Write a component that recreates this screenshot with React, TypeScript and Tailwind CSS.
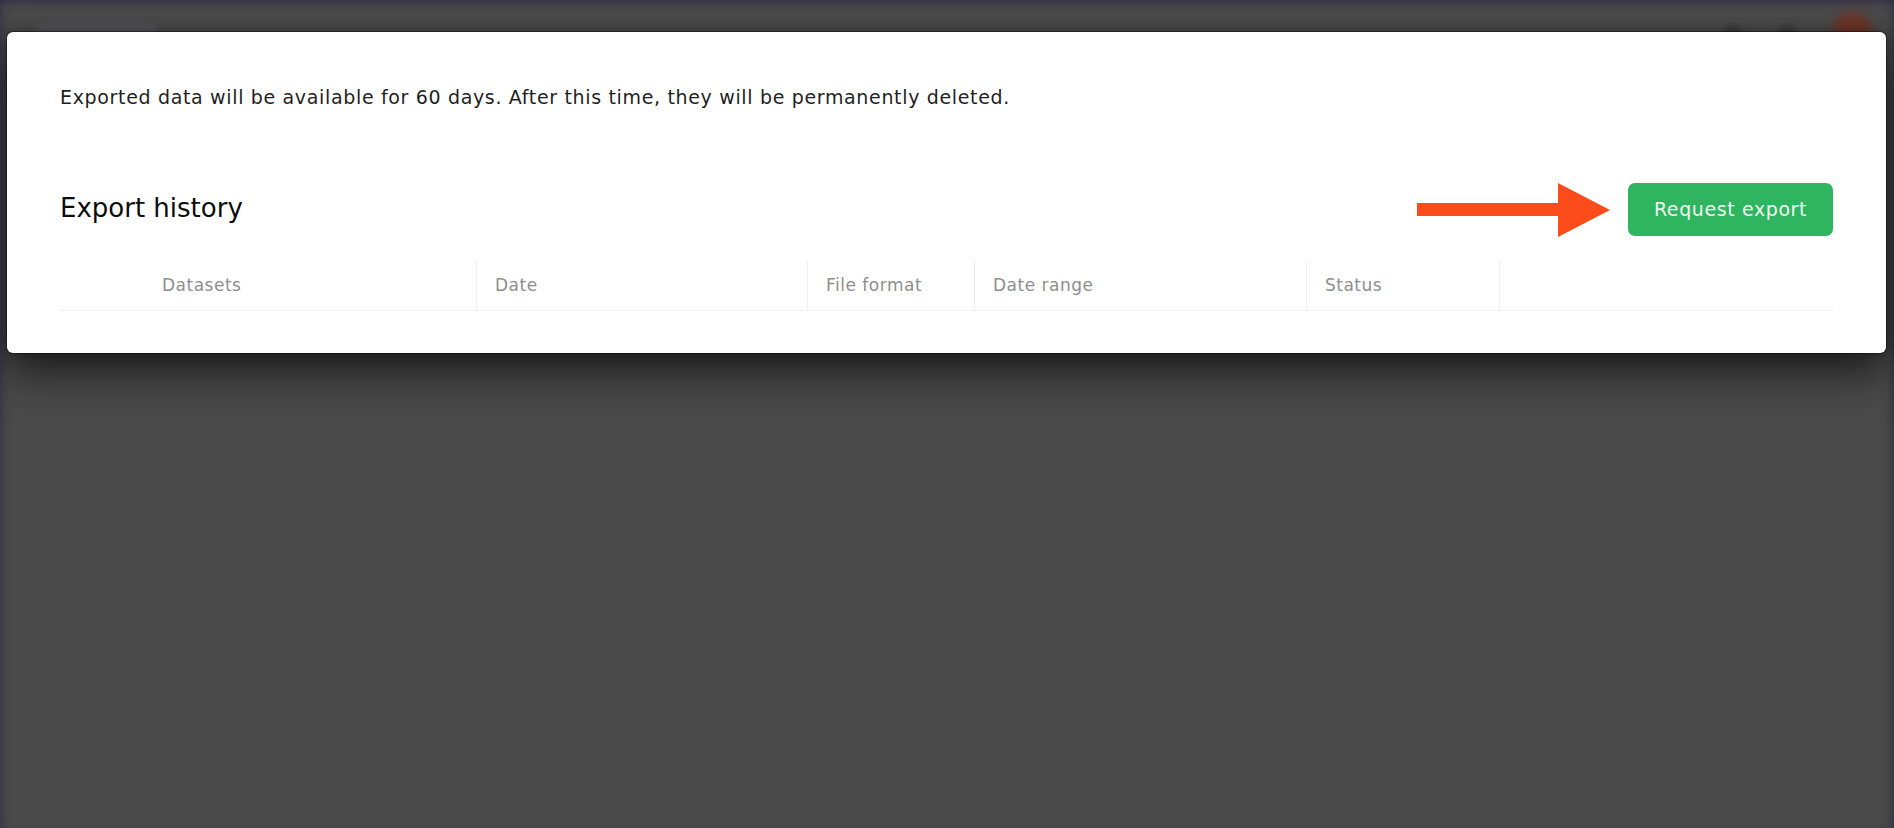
const columns = [
  { label: 'Datasets', pad: 'pl-[102px]', border: false },
  { label: 'Date', pad: 'pl-[18px]', border: true },
  { label: 'File format', pad: 'pl-[18px]', border: true },
  { label: 'Date range', pad: 'pl-[18px]', border: true },
  { label: 'Status', pad: 'pl-[18px]', border: true },
  { label: '', pad: 'pl-[18px]', border: true },
];

function Arrow() {
  return (
    <svg width="193" height="54" viewBox="0 0 193 54" className="shrink-0">
      <rect x="0" y="20" width="144" height="13" fill="#fc4c1c" />
      <polygon points="141,0 193,27 141,54" fill="#fc4c1c" />
    </svg>
  );
}

export default function App() {
  return (
    <div
      className="min-h-[828px] w-full bg-[#4a4a4a] shadow-[inset_0_6px_10px_-4px_rgba(45,40,70,0.8),inset_-8px_0_10px_-6px_rgba(45,40,70,0.6),inset_8px_0_10px_-6px_rgba(45,40,70,0.5)] overflow-hidden"
      style={{ fontFamily: '"DejaVu Sans", "Noto Sans", sans-serif' }}
    >
      {/* blurred header of the page under the overlay */}
      <div className="h-[32px] flex items-start justify-between pl-[36px] pr-[22px]">
        <div className="mt-[24px] h-[10px] w-[120px] rounded bg-[#555459] blur-[3px]" />
        <div className="flex items-start gap-[36px]">
          <div className="mt-[24px] h-[18px] w-[18px] rounded-full bg-[#3b3b3d] blur-[3px]" />
          <div className="mt-[24px] h-[18px] w-[18px] rounded-full bg-[#3b3b3d] blur-[3px]" />
          <div className="mt-[12px] h-[40px] w-[40px] rounded-full bg-[#6b3528] blur-[4px]" />
        </div>
      </div>

      <div className="relative z-10 ml-[7px] mr-[8px] rounded-[6px] bg-white pt-[51px] px-[53px] pb-[42px] shadow-[0_0_0_1px_rgba(0,0,0,0.35),0_0_14px_rgba(0,0,0,0.35),0_22px_40px_rgba(0,0,0,0.55)]">
        <p className="text-[19px] leading-[28px] tracking-[0.66px] text-[#1f1f1f]">
          Exported data will be available for 60 days. After this time, they will be permanently deleted.
        </p>

        <div className="mt-[72px] flex h-[53px] items-center justify-between">
          <h2 className="mb-[4px] text-[26px] leading-none text-[#0c0c0c]">
            Export history
          </h2>
          <div className="flex items-center gap-[18px]">
            <Arrow />
            <button className="h-[53px] w-[205px] rounded-[7px] bg-[#2fb45f] text-[19px] tracking-[0.6px] text-[#eefaf2]">
              Request export
            </button>
          </div>
        </div>

        <div className="mt-[22px] grid h-[53px] grid-cols-[416px_331px_167px_332px_193px_1fr] border-b border-[#f0f0f0]">
          {columns.map((c, i) => (
            <div
              key={i}
              className={`mt-[3px] flex items-center text-[17px] tracking-[0.5px] text-[#8e8e8e] ${c.pad} ${c.border ? 'border-l border-[#efefef]' : ''}`}
            >
              {c.label}
            </div>
          ))}
        </div>
      </div>
    </div>
  );
}
